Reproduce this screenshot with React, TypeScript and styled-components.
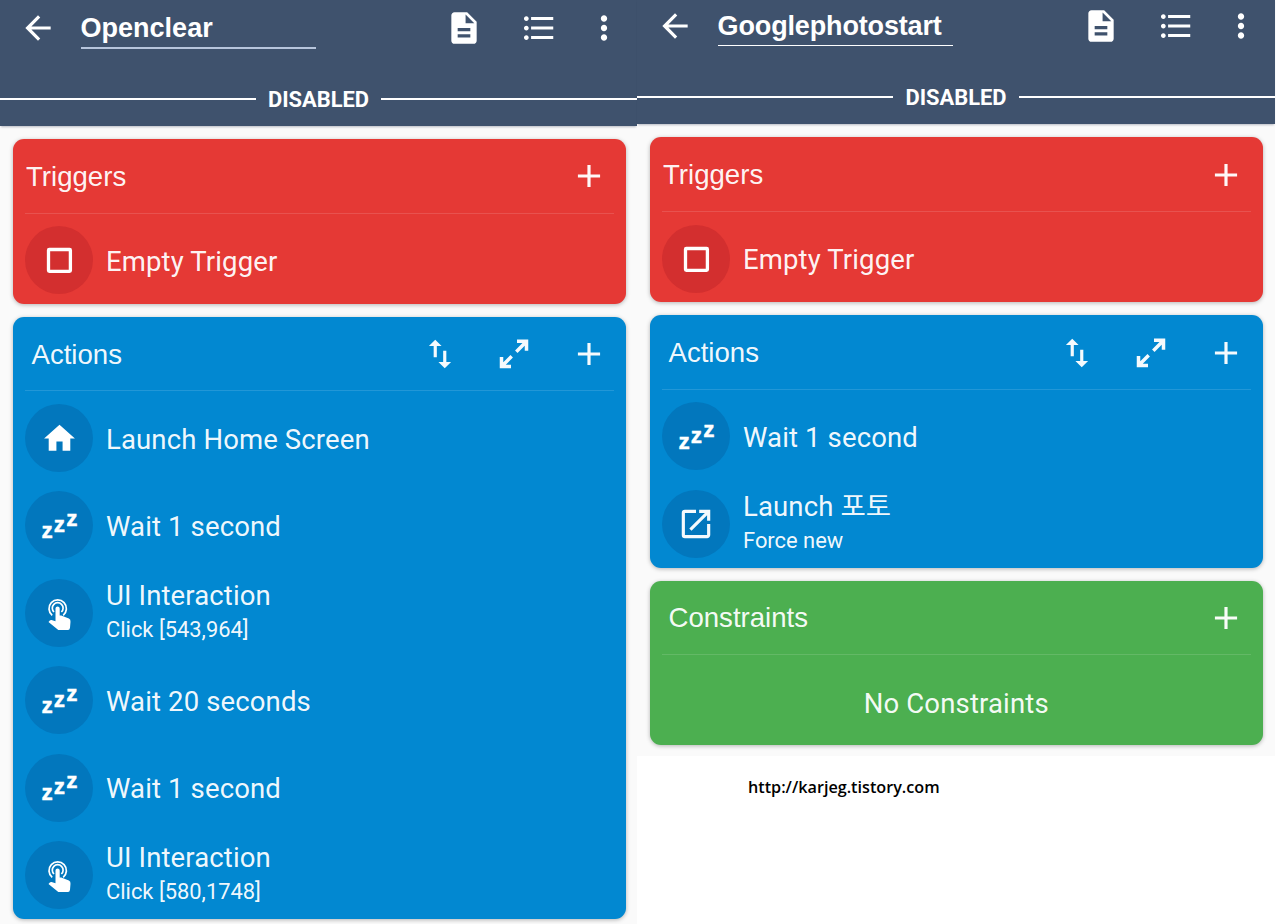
import React from "react";
import styled, { createGlobalStyle } from "styled-components";
import {
  MdAdd,
  MdArrowBack,
  MdDescription,
  MdFormatListBulleted,
  MdHome,
  MdLaunch,
  MdMoreVert,
  MdSwapVert,
} from "react-icons/md";

const GlobalStyle = createGlobalStyle`
  * { box-sizing: border-box; }
  body { margin: 0; background: #fff; font-family: Roboto, "Noto Sans CJK KR", sans-serif; }
  svg { display: block; flex: none; }
`;

const Page = styled.main`
  display: flex;
  align-items: flex-start;
  width: 1280px;
  height: 924px;
  overflow: hidden;
  background: #fff;
`;

const Column = styled.section<{ $width: number; $shift?: number }>`
  width: ${(p) => p.$width}px;
  flex: none;
  margin-top: ${(p) => p.$shift ?? 0}px;
`;

const Screen = styled.div`
  background: #fafafa;
  padding-bottom: 10.5px;
`;

const Header = styled.header`
  height: 126px;
  background: #3f526d;
  box-shadow: 0 2px 2px -1px rgba(30, 40, 70, 0.3);
  color: #fff;
`;

const Toolbar = styled.div`
  display: flex;
  align-items: center;
  height: 55.5px;
  padding-left: 18.5px;
`;

const NameField = styled.div<{ $thin?: boolean }>`
  width: 235px;
  height: ${(p) => (p.$thin ? 48 : 48.5)}px;
  align-self: flex-start;
  margin: 0 129px 0 24.1px;
  padding-top: 11.5px;
  border-bottom: ${(p) => (p.$thin ? "1px solid #fff" : "2px solid #b7c5dc")};
  font: bold 27px/33px "Liberation Sans", sans-serif;
  letter-spacing: ${(p) => (p.$thin ? "-0.15px" : "0")};
`;

const ToolbarIcons = styled.div`
  display: flex;
  align-items: center;
  svg:nth-child(2) { margin-left: 37.2px; }
  svg:nth-child(3) { margin-left: 27.7px; }
`;

const StateBar = styled.div`
  display: flex;
  align-items: center;
  height: 30px;
  margin-top: 28.3px;
  gap: 12.3px;
  font-size: 21.9px;
  line-height: 30px;
  font-weight: 700;
  &::before, &::after { content: ""; flex: 1; height: 2px; background: #fff; }
  span { padding-top: 2px; }
`;

const Cards = styled.div`
  display: flex;
  flex-direction: column;
  gap: 13px;
  padding: 13px 12px 0 12.5px;
`;

const Card = styled.section<{ $color: string }>`
  width: 613.5px;
  padding: 0 12.5px;
  border-radius: 11px;
  background: ${(p) => p.$color};
  box-shadow: 0 1px 4px rgba(0, 0, 0, 0.28);
  color: rgba(255, 255, 255, 0.96);
`;

const CardHeader = styled.div<{ $indent: number }>`
  display: flex;
  align-items: center;
  height: 74.5px;
  padding: 1px 6px 0 ${(p) => p.$indent}px;
  border-bottom: 1px solid rgba(255, 255, 255, 0.13);
`;

const CardTitle = styled.h2`
  flex: 1;
  margin: 0;
  padding-top: 1px;
  font: normal 27.6px/34px "Liberation Sans", sans-serif;
`;

const CardTools = styled.div`
  display: flex;
  align-items: center;
  gap: 36.2px;
`;

const Rows = styled.div`
  padding-top: 3px;
`;

const Row = styled.div`
  display: flex;
  align-items: center;
  height: 87.4px;
  gap: 13px;
`;

const EmptyRow = styled(Row)`
  justify-content: center;
  padding-top: 3px;
  font-size: 27.5px;
  letter-spacing: 0.15px;
`;

const Disc = styled.div<{ $color: string }>`
  display: flex;
  align-items: center;
  justify-content: center;
  width: 68px;
  height: 68px;
  border-radius: 50%;
  background: ${(p) => p.$color};
`;

const RowText = styled.div<{ $single: boolean }>`
  display: flex;
  flex-direction: column;
  white-space: nowrap;
  padding: ${(p) => (p.$single ? "3.6px 0 0" : "0 0 2.4px")};
`;

const RowTitle = styled.span`
  font-size: 27.5px;
  line-height: 36px;
  letter-spacing: 0.13px;
`;

const RowDetail = styled.span`
  font-size: 21.9px;
  line-height: 31px;
`;

const SiteLink = styled.div`
  margin: 19px 0 0 111px;
  font: 600 16.2px/24px "Open Sans", sans-serif;
  color: #000;
`;

const ExpandIcon = () => (
  <svg width="38" height="38" viewBox="0 0 38 38" fill="none" stroke="currentColor" strokeWidth="3.5">
    <path d="M22 6.300H31.500V15.800M30.700 7.300L21.300 16.700M6.500 22V31.500H16M7.300 30.700L16.700 21.300" />
  </svg>
);

const SquareIcon = () => (
  <svg width="38" height="38" viewBox="0 0 38 38" fill="none" stroke="#fff" strokeWidth="3.3">
    <rect x="8.500" y="8.500" width="21.900" height="21.900" rx="0.8" />
  </svg>
);

const SnoozeText = styled.div`
  display: flex;
  padding: 4.6px 0 0 1px;
  font: bold 22.5px/24px "Liberation Sans", sans-serif;
  color: #fff;
  -webkit-text-stroke: 0.4px #fff;
  span { width: 12.4px; text-align: center; }
  span:nth-child(1) { margin-top: 6px; }
  span:nth-child(2) { margin-top: 0; }
  span:nth-child(3) { margin-top: -6px; }
`;

const SnoozeIcon = () => (
  <SnoozeText>
    <span>z</span>
    <span>z</span>
    <span>z</span>
  </SnoozeText>
);

const TapIcon = () => (
  <svg width="38" height="38" viewBox="0 0 38 38" fill="none">
    <g stroke="#fff" strokeWidth="1.700">
      <path d="M12.200 21.300A8.700 8.700 0 1 1 23.200 21.300" />
      <path d="M14 18A5.400 5.400 0 1 1 21.400 18" />
    </g>
    <path
      fill="#fff"
      d="M15.500 14.500C15.500 11.800 19.700 11.800 19.700 14.500V21.500H21.200L28.900 24.600Q30.800 25.600 30.500 27.800L30 33.800Q29.700 36 28 36H18.300L8.500 27.900L9.800 26.500Q10.500 25.900 11.500 26.100L15.500 27.300Z"
    />
  </svg>
);

type IconName = "square" | "home" | "snooze" | "tap" | "launch";

const rowIcons: Record<IconName, React.ReactNode> = {
  square: <SquareIcon />,
  home: <MdHome size={37} color="#fff" />,
  snooze: <SnoozeIcon />,
  tap: <TapIcon />,
  launch: <MdLaunch size={38} />,
};

interface Item {
  icon: IconName;
  title: string;
  detail?: string;
}

interface MacroCardProps {
  title: string;
  color: string;
  disc?: string;
  indent?: number;
  sortable?: boolean;
  items?: Item[];
  empty?: string;
}

const MacroCard = ({ title, color, disc = color, indent = 6.5, sortable, items = [], empty }: MacroCardProps) => (
  <Card $color={color}>
    <CardHeader $indent={indent}>
      <CardTitle>{title}</CardTitle>
      <CardTools>
        {sortable && <MdSwapVert size={38} />}
        {sortable && <ExpandIcon />}
        <MdAdd size={38} />
      </CardTools>
    </CardHeader>
    <Rows>
      {items.map((item, i) => (
        <Row key={i}>
          <Disc $color={disc}>{rowIcons[item.icon]}</Disc>
          <RowText $single={!item.detail}>
            <RowTitle>{item.title}</RowTitle>
            {item.detail && <RowDetail>{item.detail}</RowDetail>}
          </RowText>
        </Row>
      ))}
      {empty && <EmptyRow>{empty}</EmptyRow>}
    </Rows>
  </Card>
);

const MacroHeader = ({ name, thin }: { name: string; thin?: boolean }) => (
  <Header>
    <Toolbar>
      <MdArrowBack size={38} />
      <NameField $thin={thin}>{name}</NameField>
      <ToolbarIcons>
        <MdDescription size={38} />
        <MdFormatListBulleted size={38} />
        <MdMoreVert size={38} />
      </ToolbarIcons>
    </Toolbar>
    <StateBar>
      <span>DISABLED</span>
    </StateBar>
  </Header>
);

const triggers: Item[] = [{ icon: "square", title: "Empty Trigger" }];

const clearActions: Item[] = [
  { icon: "home", title: "Launch Home Screen" },
  { icon: "snooze", title: "Wait 1 second" },
  { icon: "tap", title: "UI Interaction", detail: "Click [543,964]" },
  { icon: "snooze", title: "Wait 20 seconds" },
  { icon: "snooze", title: "Wait 1 second" },
  { icon: "tap", title: "UI Interaction", detail: "Click [580,1748]" },
];

const photoActions: Item[] = [
  { icon: "snooze", title: "Wait 1 second" },
  { icon: "launch", title: "Launch 포토", detail: "Force new" },
];

const RED = "#e53935";
const RED_DISC = "#d32f2f";
const BLUE = "#0288d1";
const BLUE_DISC = "#0277bd";
const GREEN = "#4caf50";

export default function App() {
  return (
    <>
      <GlobalStyle />
      <Page>
        <Column $width={637}>
          <Screen>
            <MacroHeader name="Openclear" />
            <Cards>
              <MacroCard title="Triggers" color={RED} disc={RED_DISC} indent={1} items={triggers} />
              <MacroCard title="Actions" color={BLUE} disc={BLUE_DISC} sortable items={clearActions} />
            </Cards>
          </Screen>
        </Column>
        <Column $width={638} $shift={-1.6}>
          <Screen>
            <MacroHeader name="Googlephotostart" thin />
            <Cards>
              <MacroCard title="Triggers" color={RED} disc={RED_DISC} indent={1} items={triggers} />
              <MacroCard title="Actions" color={BLUE} disc={BLUE_DISC} sortable items={photoActions} />
              <MacroCard title="Constraints" color={GREEN} empty="No Constraints" />
            </Cards>
          </Screen>
          <SiteLink>http://karjeg.tistory.com</SiteLink>
        </Column>
      </Page>
    </>
  );
}
